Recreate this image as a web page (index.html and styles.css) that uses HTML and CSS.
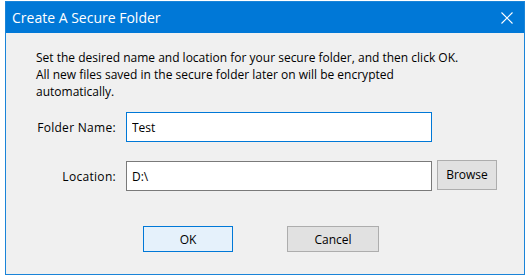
FILE: index.html
```html
<!DOCTYPE html>
<html lang="en">
  <head>
    <meta charset="UTF-8" />
    <title>Create A Secure Folder</title>
    <link rel="stylesheet" href="styles.css">
  </head>
  <body>
    <div class="window">
      <div class="titlebar">
        <span class="title">Create A Secure Folder</span>
        <svg class="close" width="12" height="12" viewBox="0 0 12 12">
          <path d="M0.5 0.5 L11.5 11.5 M11.5 0.5 L0.5 11.5" stroke="#ffffff" stroke-width="1.1" fill="none" />
        </svg>
      </div>
      <div class="content">
        <p class="intro">
          Set the desired name and location for your secure folder, and then click OK.<br>
          All new files saved in the secure folder later on will be encrypted<br>
          automatically.
        </p>
        <div class="fields">
          <label class="label" for="folderName">Folder Name:</label>
          <input class="field focused" id="folderName" type="text" value="Test" />
          <span></span>
          <label class="label" for="location">Location:</label>
          <input class="field" id="location" type="text" value="D:\" />
          <button class="btn browse">Browse</button>
        </div>
        <div class="actions">
          <button class="btn default">OK</button>
          <button class="btn">Cancel</button>
        </div>
      </div>
    </div>
  </body>
</html>
```

FILE: styles.css
```css
body {
  margin: 0;
  background: #ffffff;
  font-family: "Open Sans", "Noto Sans", sans-serif;
  font-size: 12px;
  color: #000000;
}
.window {
  box-sizing: border-box;
  width: 520px;
  height: 274px;
  margin: 1px 0 0 5px;
  border: 1px solid #1a84d8;
  background: #f0f0f0;
  display: flex;
  flex-direction: column;
}
.titlebar {
  height: 31px;
  background: #0078d7;
  color: #ffffff;
  display: flex;
  align-items: center;
  justify-content: space-between;
  padding: 0 11px 0 6px;
}
.title {
  font-size: 14px;
}
.close {
  display: block;
}
.content {
  padding: 16px 0 0 30px;
}
.intro {
  margin: 0;
  line-height: 17px;
}
.fields {
  display: grid;
  grid-template-columns: 80px 306px 60px;
  column-gap: 10px;
  row-gap: 19px;
  align-items: center;
  margin-top: 12px;
}
.label {
  text-align: right;
  letter-spacing: 0.3px;
}
.field {
  box-sizing: border-box;
  height: 30px;
  margin: 0;
  padding: 0 5px;
  border: 1px solid #7a7a7a;
  background: #ffffff;
  font-family: inherit;
  font-size: 12px;
  color: #000000;
  outline: none;
}
.field.focused {
  border-color: #0078d7;
}
.btn {
  box-sizing: border-box;
  margin: 0;
  padding: 0;
  height: 26px;
  border: 1px solid #adadad;
  background: #e1e1e1;
  font-family: inherit;
  font-size: 12px;
  color: #000000;
}
.browse {
  width: 60px;
  height: 30px;
  margin-left: -5px;
  margin-top: -3px;
}
.actions {
  display: flex;
  gap: 54px;
  margin: 35px 0 0 107px;
}
.actions .btn {
  width: 92px;
}
.actions .btn.default {
  width: 90px;
  background: #e5f1fb;
  border-color: #0078d7;
}
```
